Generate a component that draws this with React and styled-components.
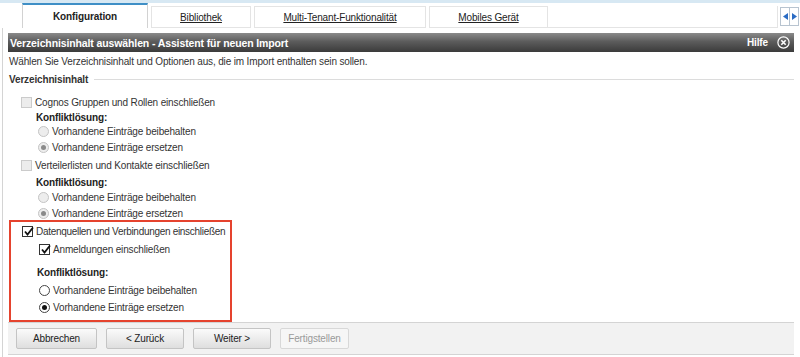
import React from "react";
import styled, { createGlobalStyle } from "styled-components";

const Global = createGlobalStyle`
  body {
    margin: 0;
    background: #fff;
    font-family: "Liberation Sans", Arial, sans-serif;
    font-size: 10px;
    letter-spacing: -0.15px;
    color: #222;
  }
`;

const Page = styled.div`
  width: 800px;
  height: 357px;
  overflow: hidden;
  background: #fff;
  border-top: 3px solid #d7e8f3;
  box-sizing: border-box;
`;

const TabStrip = styled.div`
  display: flex;
  align-items: flex-end;
  height: 25px;
  padding-left: 22px;
  padding-right: 1px;
`;

const Tab = styled.div`
  box-sizing: border-box;
  width: ${(p) => p.w}px;
  height: ${(p) => (p.active ? 25 : 22)}px;
  margin-right: 3px;
  display: flex;
  align-items: center;
  justify-content: center;
  background: #fff;
  border: 1px solid ${(p) => (p.active ? "#d2d2d2" : "#e4e4e4")};
  border-top: ${(p) => (p.active ? "2px solid #3f8fc6" : "1px solid #e4e4e4")};
  border-bottom: ${(p) => (p.active ? "none" : "1px solid #e4e4e4")};
  font-weight: ${(p) => (p.active ? "bold" : "normal")};
  letter-spacing: ${(p) => (p.active ? "-0.1px" : "-0.15px")};
  text-decoration: ${(p) => (p.active ? "none" : "underline")};
  color: #222;
  padding-bottom: ${(p) => (p.active ? 1 : 0)}px;
`;

const StripFill = styled.div`
  flex: 1;
  height: 22px;
  box-sizing: border-box;
  border-bottom: 1px solid #e4e4e4;
  border-right: 1px solid #e4e4e4;
  margin-left: -3px;
  margin-right: 2px;
`;

const Arrows = styled.div`
  display: flex;
  align-self: center;
  margin-bottom: -2px;
  border: 1px solid #b8c4d0;
  background: #fff;
`;

const ArrowBtn = styled.div`
  width: 8px;
  height: 17px;
  display: flex;
  align-items: center;
  justify-content: center;
  border-left: ${(p) => (p.right ? "1px solid #b8c4d0" : "none")};
`;

const Body = styled.div`
  margin-left: 2px;
  border-left: 1px solid #d4d4d4;
  padding: 5px 6px 0 5px;
  height: 330px;
  box-sizing: border-box;
`;

const TitleBar = styled.div`
  height: 19px;
  display: flex;
  align-items: center;
  justify-content: space-between;
  padding: 0 4px 0 2px;
  background: linear-gradient(#8a8a8a 0%, #5c5c5c 45%, #3b3b3b 100%);
  color: #fff;
  font-weight: bold;
  font-size: 10.5px;
  letter-spacing: -0.12px;
`;

const TitleRight = styled.div`
  display: flex;
  align-items: center;
  gap: 9px;
  font-size: 10px;
`;

const Intro = styled.div`
  height: 18px;
  display: flex;
  align-items: center;
  padding-left: 1px;
  color: #333;
`;

const Section = styled.div`
  height: 18px;
  display: flex;
  align-items: center;
  gap: 6px;
  padding-left: 1px;
  font-weight: bold;
  color: #333;
  &::after {
    content: "";
    flex: 1;
    height: 1px;
    background: #dcdcdc;
  }
`;

const List = styled.div`
  padding-top: 7px;
`;

const Row = styled.div`
  height: 14px;
  margin-top: ${(p) => p.mt || 0}px;
  display: flex;
  align-items: center;
  gap: 3px;
  padding-left: ${(p) => p.indent || 0}px;
  white-space: nowrap;
  color: #333;
  letter-spacing: ${(p) => (p.tight ? "-0.3px" : "inherit")};
`;

const Label = styled(Row)`
  font-weight: bold;
  color: #222;
`;

const Box = styled.div`
  flex: none;
  width: 11px;
  height: 11px;
  box-sizing: border-box;
  border: 1px solid ${(p) => (p.on ? "#333" : "#cbcbcb")};
  background: ${(p) => (p.on ? "#fff" : "#ececec")};
  position: relative;
`;

const Radio = styled.div`
  flex: none;
  width: 11px;
  height: 11px;
  box-sizing: border-box;
  border-radius: 50%;
  border: 1px solid ${(p) => (p.on ? "#444" : "#c4c4c4")};
  background: ${(p) => (p.on ? "#fff" : "#ededed")};
  display: flex;
  align-items: center;
  justify-content: center;
  &::after {
    content: "";
    display: ${(p) => (p.sel ? "block" : "none")};
    width: 5px;
    height: 5px;
    border-radius: 50%;
    background: ${(p) => (p.on ? "#111" : "#8a8a8a")};
  }
`;

const Highlight = styled.div`
  width: 223px;
  height: 102px;
  box-sizing: border-box;
  border: 2px solid #e5432e;
  margin-left: 1px;
  padding: 2px 0 0 11px;
`;

const Footer = styled.div`
  margin-top: 0;
  height: 33px;
  box-sizing: border-box;
  background: #f2f2f2;
  border-top: 1px solid #d4d4d4;
  border-bottom: 1px solid #d4d4d4;
  display: flex;
  align-items: center;
  gap: 9px;
  padding-left: 8px;
`;

const Button = styled.div`
  width: ${(p) => p.w}px;
  height: 21px;
  box-sizing: border-box;
  display: flex;
  align-items: center;
  justify-content: center;
  border: 1px solid ${(p) => (p.disabled ? "#d8d8d8" : "#c4c4c4")};
  border-radius: 2px;
  background: ${(p) =>
    p.disabled ? "#f6f6f6" : "linear-gradient(#fbfbfb, #dedede)"};
  color: ${(p) => (p.disabled ? "#9a9a9a" : "#222")};
`;

const Check = () => (
  <svg width="11" height="11" viewBox="0 0 11 11" style={{ position: "absolute", left: 0, top: -1 }}>
    <path d="M2 5.5 L4.5 8.5 L10 1.5" fill="none" stroke="#111" strokeWidth="1.8" />
  </svg>
);

const CloseIcon = () => (
  <svg width="13" height="13" viewBox="0 0 13 13">
    <circle cx="6.5" cy="6.5" r="5.6" fill="none" stroke="#fff" strokeWidth="1.2" />
    <path d="M4.3 4.3 L8.7 8.7 M8.7 4.3 L4.3 8.7" stroke="#fff" strokeWidth="1.6" />
  </svg>
);

const Tri = ({ right }) => (
  <svg width="5" height="7" viewBox="0 0 5 7">
    <path d={right ? "M0 0 L5 3.5 L0 7 Z" : "M5 0 L0 3.5 L5 7 Z"} fill="#2b6cc4" />
  </svg>
);

// gaps: [label, radio1, radio2] margin-tops; x: label indent, radio indent
const Conflict = ({ on, gaps, x }) => (
  <>
    <Label indent={x} mt={gaps[0]}>Konfliktlösung:</Label>
    <Row indent={x + 2} mt={gaps[1]}>
      <Radio on={on} />
      <span>Vorhandene Einträge beibehalten</span>
    </Row>
    <Row indent={x + 2} mt={gaps[2]}>
      <Radio on={on} sel />
      <span>Vorhandene Einträge ersetzen</span>
    </Row>
  </>
);

export default function App() {
  return (
    <>
      <Global />
      <Page>
        <TabStrip>
          <Tab active w={126}>Konfiguration</Tab>
          <Tab w={100}>Bibliothek</Tab>
          <Tab w={172}>Multi-Tenant-Funktionalität</Tab>
          <Tab w={119}>Mobiles Gerät</Tab>
          <StripFill />
          <Arrows>
            <ArrowBtn><Tri /></ArrowBtn>
            <ArrowBtn right><Tri right /></ArrowBtn>
          </Arrows>
        </TabStrip>
        <Body>
          <TitleBar>
            <span>Verzeichnisinhalt auswählen - Assistent für neuen Import</span>
            <TitleRight>
              <span>Hilfe</span>
              <CloseIcon />
            </TitleRight>
          </TitleBar>
          <Intro>Wählen Sie Verzeichnisinhalt und Optionen aus, die im Import enthalten sein sollen.</Intro>
          <Section>Verzeichnisinhalt</Section>
          <List>
            <Row indent={13}>
              <Box />
              <span>Cognos Gruppen und Rollen einschließen</span>
            </Row>
            <Conflict x={28} gaps={[1, 0, 2]} />
            <Row indent={13} mt={4}>
              <Box />
              <span>Verteilerlisten und Kontakte einschließen</span>
            </Row>
            <Conflict x={28} gaps={[3, 1, 2]} />
            <Highlight>
              <Row tight>
                <Box on><Check /></Box>
                <span>Datenquellen und Verbindungen einschließen</span>
              </Row>
              <Row indent={17} mt={4}>
                <Box on><Check /></Box>
                <span>Anmeldungen einschließen</span>
              </Row>
              <Conflict on x={15} gaps={[9, 4, 3]} />
            </Highlight>
          </List>
          <Footer>
            <Button w={81}>Abbrechen</Button>
            <Button w={78}>&lt; Zurück</Button>
            <Button w={78}>Weiter &gt;</Button>
            <Button w={69} disabled>Fertigstellen</Button>
          </Footer>
        </Body>
      </Page>
    </>
  );
}
